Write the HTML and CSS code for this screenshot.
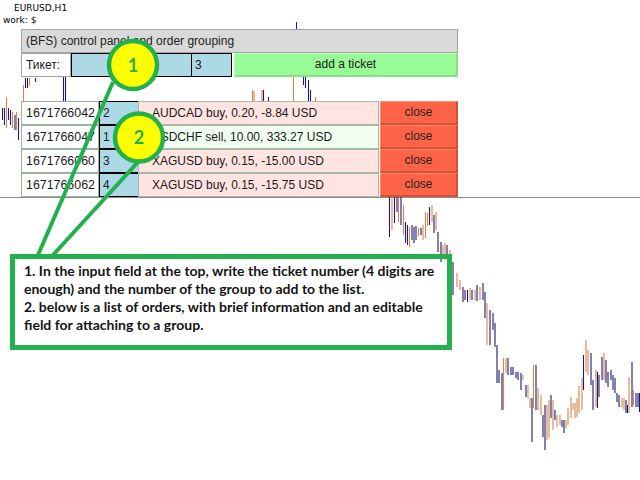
FILE: index.html
```html
<!DOCTYPE html>
<html>
<head>
<meta charset="utf-8">
<title>BFS control panel</title>
<link rel="stylesheet" href="styles.css">
</head>
<body>
<div class="screen">
  <svg class="chart" width="640" height="480" viewBox="0 0 640 480">
    <line class="price-line" x1="0" y1="197.5" x2="640" y2="197.5"/>
    <path class="bar-n" d="M2.5 108V120M4.5 108V125M8.5 108V120M10.5 110V125M15 115V130M18.5 118V140M25.5 78V88M27.5 78V88M35.5 78V82M63.5 76V101M65.5 76V101M263.5 90V101M268.5 97V101M296.5 22V40M303.5 76V85M305.5 76V88M308.5 80V101M310.5 90V101M389.5 190V237M394.5 195V223M397 195V212M401 195V225M405.5 222V243M407.5 225V245M412 225V240M414 227V243M416 226V240M421 228V235M429.5 207V225M434 215V233M438 232V252M441 242V262M447 245V255M453 262V295M463 287V302M465 290V300M467.5 290V302M472 290V300M477 285V301M483 283V300M485 292V318M490 310V345M493 313V330M495 323V347M497 345V383M499 370V383M502 373V410M508 358V375M511 367V375M513 367V375M516 372V378M518 372V380M521 373V390M526 385V397M532 398V442M536 365V410M543 415V437M545 405V450M551 395V418M555 410V420M562 420V427M564 420V433M583.5 355V390M591 353V385M593 380V410M597.5 372V408M599 375V397M602 357V380M606 360V383M608 372V387M611 370V380M613 375V390M615 378V393M617 393V402M619 395V407M626 400V413M627.5 405V413M632 362V407M636 393V407M638 393V407M639.5 393V412"/>
    <path class="bar-o" d="M6.5 97V128M12.5 112V128M16.5 112V130M23.5 85V101M29.5 78V86M252.5 90V101M254 91V101M262 90V101M293.5 70V101M315.5 97V101M392 195V230M398.5 195V222M403.5 205V235M409.5 227V247M418.5 228V236M423 225V240M425.5 212V238M427.5 213V226M432 205V222M436 212V230M443 245V257M445 243V260M450 250V262M457 273V287M460 280V290M470 288V300M475 290V300M480 287V300M487 303V345M503.5 358V410M506 358V373M523 375V380M528 385V398M530 398V408M533.5 365V408M538 388V410M541 395V415M547 405V440M549 400V438M553 400V430M557 415V427M560 415V425M566 420V428M568 408V425M571 397V418M573 403V410M575 403V418M577 398V417M579 386V413M582 378V410M586 340V372M588 350V375M596 370V407M604 353V380M622 398V407M624 398V410M629 377V413M633.5 390V405"/>
  </svg>

  <div class="content">
    <div class="caption">
      <div class="symbol">EURUSD,H1</div>
      <div class="work">work: $</div>
    </div>

    <div class="panel">
      <div class="title">(BFS) control panel and order grouping</div>
      <div class="input-row">
        <div class="label">Тикет:</div>
        <div class="ticket-input"></div>
        <div class="group-input">3</div>
        <div class="add-btn">add a ticket</div>
      </div>
      <div class="orders">
        <div class="order">
          <div class="ticket">1671766042</div>
          <div class="group">2</div>
          <div class="info">AUDCAD buy, 0.20, -8.84 USD</div>
          <div class="close">close</div>
        </div>
        <div class="order alt">
          <div class="ticket">1671766047</div>
          <div class="group">1</div>
          <div class="info">USDCHF sell, 10.00, 333.27 USD</div>
          <div class="close">close</div>
        </div>
        <div class="order">
          <div class="ticket">1671766060</div>
          <div class="group">3</div>
          <div class="info">XAGUSD buy, 0.15, -15.00 USD</div>
          <div class="close">close</div>
        </div>
        <div class="order">
          <div class="ticket">1671766062</div>
          <div class="group">4</div>
          <div class="info">XAGUSD buy, 0.15, -15.75 USD</div>
          <div class="close">close</div>
        </div>
      </div>
    </div>

    <div class="note">1. In the input field at the top, write the ticket number (4 digits are<br>enough) and the number of the group to add to the list.<br>2. below is a list of orders, with brief information and an editable<br>field for attaching to a group.</div>
  </div>

  <svg class="callouts" width="640" height="480" viewBox="0 0 640 480">
    <line class="pointer" x1="113" y1="82" x2="38" y2="255"/>
    <line class="pointer" x1="138" y1="162" x2="53" y2="255"/>
    <circle class="bubble" cx="133" cy="65" r="24"/>
    <circle class="bubble" cx="139" cy="137.5" r="24"/>
    <text class="num" x="133" y="71.5">1</text>
    <text class="num" x="139" y="144">2</text>
  </svg>
</div>
</body>
</html>
```

FILE: styles.css
```css
* { box-sizing: border-box; }

html, body {
  margin: 0;
  padding: 0;
  background: #ffffff;
}

.screen {
  position: relative;
  width: 640px;
  height: 480px;
  overflow: hidden;
  background: #ffffff;
  font-family: "Liberation Sans", Arial, sans-serif;
  color: #1a1a1a;
}

.chart {
  position: absolute;
  left: 0;
  top: 0;
}

.price-line {
  stroke: #8c8c8c;
  stroke-width: 1;
}

.bar-n {
  stroke: #1c1c72;
  stroke-width: 1.1;
  fill: none;
}

.bar-o {
  stroke: #d4874b;
  stroke-width: 1.1;
  fill: none;
}

.content {
  position: relative;
}

.caption {
  height: 29px;
  padding-top: 2px;
  font-family: "DejaVu Sans", sans-serif;
  font-size: 9px;
  line-height: 12px;
  color: #000;
}

.symbol { padding-left: 14px; }
.work { padding-left: 3px; }

.panel {
  margin-left: 21px;
  width: 437px;
  font-size: 12px;
}

.title {
  height: 24px;
  border: 1px solid #a4a4a4;
  background: #d9d9d9;
  padding-left: 4px;
  line-height: 22px;
  color: #222;
}

.input-row {
  display: flex;
  height: 24px;
  background: #fff;
}

.label {
  width: 50px;
  border: 1px solid #a4a4a4;
  background: #fff;
  padding-left: 4px;
  line-height: 22px;
}

.ticket-input {
  width: 121px;
  border: 1px solid #000;
  background: #add8e6;
}

.group-input {
  width: 41px;
  margin-left: -1px;
  border: 1px solid #000;
  background: #add8e6;
  padding-left: 3px;
  line-height: 22px;
}

.add-btn {
  flex: 1;
  margin-left: 2px;
  background: #98fb98;
  border-top: 1px solid #b6ffb6;
  border-left: 1px solid #b6ffb6;
  border-right: 2px solid #84e284;
  border-bottom: 2px solid #84e284;
  text-align: center;
  line-height: 21px;
}

.orders {
  margin-top: 24px;
}

.order {
  display: flex;
  height: 24px;
}

.ticket {
  width: 78px;
  border: 1px solid #9fb09f;
  background: #fff;
  padding-left: 4px;
  line-height: 22px;
  font-size: 12.4px;
}

.group {
  width: 40px;
  border: 1px solid #000;
  background: #add8e6;
  padding-left: 3px;
  line-height: 22px;
}

.info {
  width: 241px;
  margin-left: -1px;
  border: 1px solid #a8b8a8;
  background: #ffe4e1;
  padding-left: 13px;
  line-height: 22px;
}

.order.alt .info {
  background: #f0fff0;
}

.close {
  flex: 1;
  margin-left: 1px;
  background: #ff6347;
  border-top: 1px solid #ff8a70;
  border-left: 1px solid #ff8a70;
  border-right: 2px solid #d4502f;
  border-bottom: 2px solid #d4502f;
  text-align: center;
  line-height: 21px;
  color: #222;
}

.note {
  margin-left: 10px;
  margin-top: 57px;
  width: 442px;
  height: 96px;
  border: 5px solid #22b14c;
  padding: 3px 0 0 9px;
  font-family: Lato, "Noto Sans", sans-serif;
  font-weight: 700;
  font-size: 14px;
  line-height: 17.9px;
  white-space: nowrap;
  color: #141414;
}

.callouts {
  position: absolute;
  left: 0;
  top: 0;
  pointer-events: none;
}

.pointer {
  stroke: #22b14c;
  stroke-width: 4;
}

.bubble {
  fill: #ffff00;
  stroke: #22b14c;
  stroke-width: 4.5;
}

.num {
  font-family: Lato, "Noto Sans", sans-serif;
  font-weight: 700;
  font-size: 18px;
  fill: #22b14c;
  text-anchor: middle;
}
```
